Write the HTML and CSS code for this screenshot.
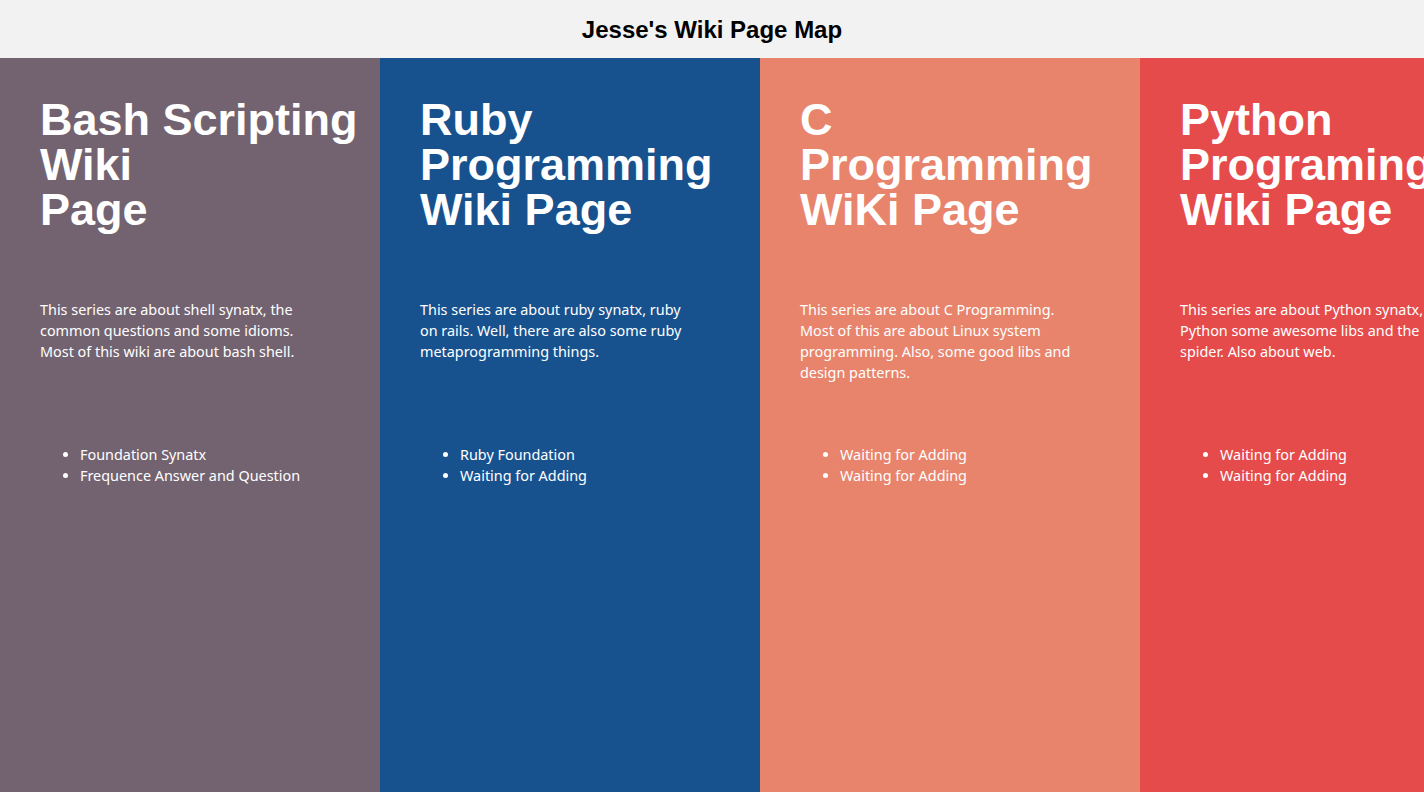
FILE: index.html
```html
<!DOCTYPE html>
<html lang="en">
<head>
<meta charset="utf-8">
<title>Jesse's Wiki Page Map</title>
<link rel="stylesheet" href="styles.css">
</head>
<body>
<header class="top-bar">
  <h2 class="site-title">Jesse's Wiki Page Map</h2>
</header>
<main class="columns">
  <section class="col col-bash">
    <h1 class="col-title">Bash Scripting<br>Wiki<br>Page</h1>
    <p class="col-desc">This series are about shell synatx, the common questions and some idioms. Most of this wiki are about bash shell.</p>
    <ul class="col-list">
      <li>Foundation Synatx</li>
      <li>Frequence Answer and Question</li>
    </ul>
  </section>
  <section class="col col-ruby">
    <h1 class="col-title">Ruby<br>Programming<br>Wiki Page</h1>
    <p class="col-desc">This series are about ruby synatx, ruby on rails. Well, there are also some ruby metaprogramming things.</p>
    <ul class="col-list">
      <li>Ruby Foundation</li>
      <li>Waiting for Adding</li>
    </ul>
  </section>
  <section class="col col-c">
    <h1 class="col-title">C<br>Programming<br>WiKi Page</h1>
    <p class="col-desc">This series are about C Programming. Most of this are about Linux system programming. Also, some good libs and design patterns.</p>
    <ul class="col-list">
      <li>Waiting for Adding</li>
      <li>Waiting for Adding</li>
    </ul>
  </section>
  <section class="col col-python">
    <h1 class="col-title">Python<br>Programing<br>Wiki Page</h1>
    <p class="col-desc">This series are about Python synatx, Python some awesome libs and the spider. Also about web.</p>
    <ul class="col-list">
      <li>Waiting for Adding</li>
      <li>Waiting for Adding</li>
    </ul>
  </section>
</main>
</body>
</html>
```

FILE: styles.css
```css
html, body {
  margin: 0;
  padding: 0;
}

body {
  overflow: hidden;
  height: 100vh;
  display: flex;
  flex-direction: column;
  font-family: "Noto Sans", "Open Sans", sans-serif;
}

.top-bar {
  height: 58px;
  flex: 0 0 58px;
  background: #f2f2f2;
  display: flex;
  align-items: center;
  justify-content: center;
}

.site-title {
  margin: 0;
  font-family: "Liberation Sans", Arial, sans-serif;
  font-weight: bold;
  font-size: 24px;
  line-height: 28px;
  color: #000;
  transform: translateY(1px);
}

.columns {
  flex: 1;
  display: flex;
  min-height: 0;
}

.col {
  flex: 0 0 380px;
  width: 380px;
  box-sizing: border-box;
  padding: 39px 40px 0 40px;
  color: #fff;
}

.col-bash { background: #736370; }
.col-ruby { background: #17528f; }
.col-c { background: #e8846c; }
.col-python { background: #e54b4b; }

.col-title {
  margin: 0;
  font-family: "Liberation Sans", Arial, sans-serif;
  font-weight: bold;
  font-size: 45px;
  line-height: 45px;
  white-space: nowrap;
}

.col-desc {
  margin: 67px 0 0 0;
  width: 280px;
  height: 145px;
  font-size: 14.4px;
  line-height: 21px;
}

.col-list {
  margin: 0;
  padding-left: 40px;
  font-size: 14.4px;
  line-height: 21px;
}
```
